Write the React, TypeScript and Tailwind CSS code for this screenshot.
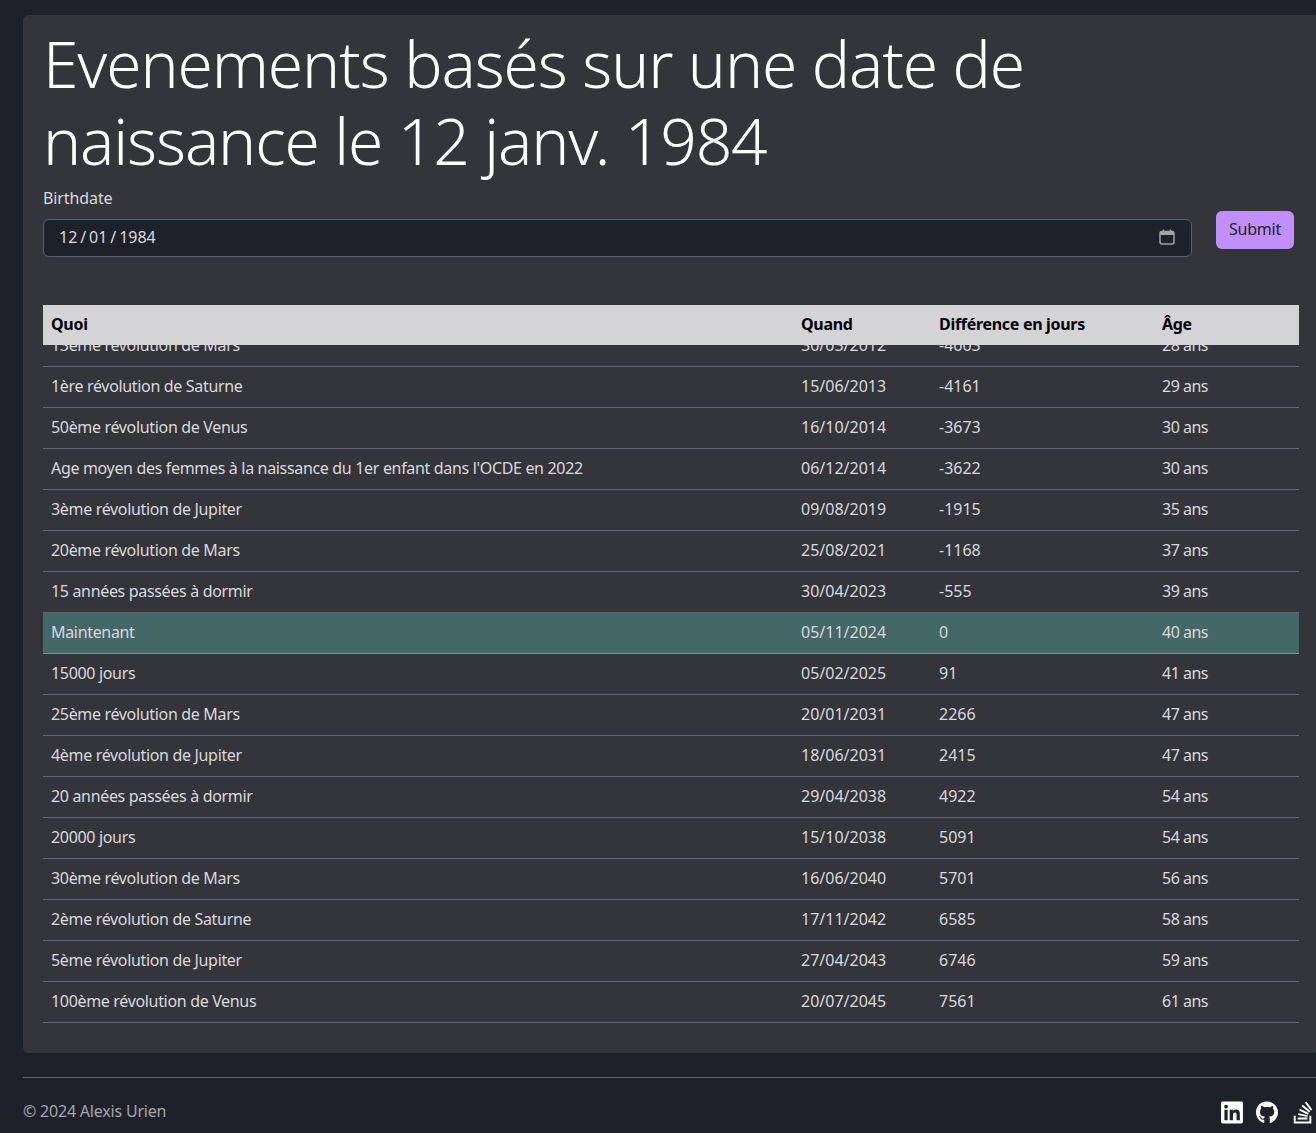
import { FaGithub, FaLinkedin, FaStackOverflow } from "react-icons/fa";

const events = [
  ["13ème révolution de Mars", "30/03/2012", "-4603", "28 ans"],
  ["1ère révolution de Saturne", "15/06/2013", "-4161", "29 ans"],
  ["50ème révolution de Venus", "16/10/2014", "-3673", "30 ans"],
  ["Age moyen des femmes à la naissance du 1er enfant dans l'OCDE en 2022", "06/12/2014", "-3622", "30 ans"],
  ["3ème révolution de Jupiter", "09/08/2019", "-1915", "35 ans"],
  ["20ème révolution de Mars", "25/08/2021", "-1168", "37 ans"],
  ["15 années passées à dormir", "30/04/2023", "-555", "39 ans"],
  ["Maintenant", "05/11/2024", "0", "40 ans"],
  ["15000 jours", "05/02/2025", "91", "41 ans"],
  ["25ème révolution de Mars", "20/01/2031", "2266", "47 ans"],
  ["4ème révolution de Jupiter", "18/06/2031", "2415", "47 ans"],
  ["20 années passées à dormir", "29/04/2038", "4922", "54 ans"],
  ["20000 jours", "15/10/2038", "5091", "54 ans"],
  ["30ème révolution de Mars", "16/06/2040", "5701", "56 ans"],
  ["2ème révolution de Saturne", "17/11/2042", "6585", "58 ans"],
  ["5ème révolution de Jupiter", "27/04/2043", "6746", "59 ans"],
  ["100ème révolution de Venus", "20/07/2045", "7561", "61 ans"],
];

const CalendarIcon = () => (
  <svg width="16" height="16" viewBox="0 0 16 16" fill="none" aria-hidden="true">
    <rect x="1" y="2.5" width="14" height="12.5" rx="2" stroke="#a3a3a6" strokeWidth="1.5" />
    <rect x="1" y="2.5" width="14" height="3.5" fill="#a3a3a6" />
    <path d="M4.5 0.5v3M11.5 0.5v3" stroke="#a3a3a6" strokeWidth="1.5" />
  </svg>
);

export default function App() {
  return (
    <div className="h-[1133px] overflow-hidden bg-[#1f212a] pl-[23px] pt-[15px] font-['Noto_Sans',sans-serif] text-base text-[#d9d9de]">
      <div className="w-[1296px]">
        <main className="h-[1038px] rounded-md bg-[#34353a] px-5">
          <h1 className="pt-2.5 text-[64px] font-light leading-[77px] tracking-[-1.1px] text-white">
            Evenements basés sur une date de
            <br />
            naissance le 12 janv. 1984
          </h1>

          <form className="mt-px flex items-start">
            <div className="w-[1149px]">
              <label className="block h-[39px] pt-1.5 leading-6 tracking-[-0.1px]">Birthdate</label>
              <div className="flex h-[38px] items-center justify-between rounded-md border border-[#5d5e66] bg-[#1f212a] pb-0.5 pl-[15px] pr-4">
                <span className="[word-spacing:-1.25px]">12 / 01 / 1984</span>
                <CalendarIcon />
              </div>
            </div>
            <button
              type="button"
              className="ml-6 mt-[31px] h-[38px] w-[78px] rounded-md bg-[#c18ffb] pb-0.5 tracking-[-0.2px] text-[#1f212a]"
            >
              Submit
            </button>
          </form>

          <div className="mt-12 h-[718px] w-[1256px] overflow-hidden">
            <div className="relative grid h-10 grid-cols-[750px_138px_223px_145px] items-center bg-[#d4d4d6] pb-0.5 font-bold tracking-[-0.3px] text-black">
              <div className="px-2">Quoi</div>
              <div className="px-2">Quand</div>
              <div className="px-2">Différence en jours</div>
              <div className="px-2">Âge</div>
            </div>
            <div className="-mt-[19px]">
              {events.map((event) => (
                <div
                  key={event[0]}
                  className={`grid h-[41px] grid-cols-[750px_138px_223px_145px] items-center border-b pb-0.5 ${
                    event[0] === "Maintenant" ? "border-[#6f9c9b] bg-[#446767]" : "border-[#66676e]"
                  }`}
                >
                  <div className="px-2 tracking-[-0.33px]">{event[0]}</div>
                  <div className="px-2">{event[1]}</div>
                  <div className="px-2">{event[2]}</div>
                  <div className="px-2 tracking-[-0.5px]">{event[3]}</div>
                </div>
              ))}
            </div>
          </div>
        </main>

        <footer className="mt-6 flex h-[56px] items-start justify-between border-t border-[#66676e]">
          <span className="pt-[21px] leading-6 tracking-[-0.2px] text-[#a6a6ad]">© 2024 Alexis Urien</span>
          <div className="flex items-center gap-[13px] pr-1.5 pt-[22px] text-white">
            <FaLinkedin className="h-[25px] w-[22px]" />
            <FaGithub className="h-[23px] w-[22px]" />
            <FaStackOverflow className="ml-0.5 h-[25px] w-[20px]" />
          </div>
        </footer>
      </div>
    </div>
  );
}
